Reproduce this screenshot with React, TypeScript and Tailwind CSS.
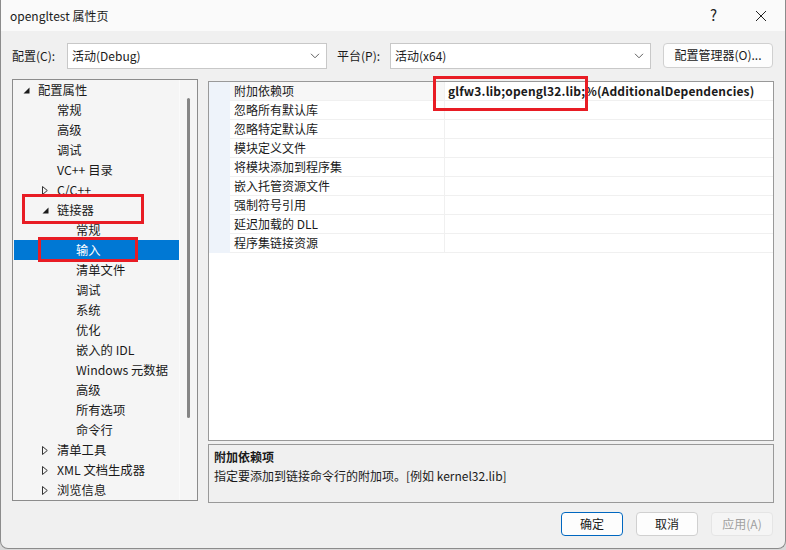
import React from 'react';

type Node = { label: string; level: number; arrow?: 'open' | 'closed'; selected?: boolean };

const treeItems: Node[] = [
  { label: '配置属性', level: 0, arrow: 'open' },
  { label: '常规', level: 1 },
  { label: '高级', level: 1 },
  { label: '调试', level: 1 },
  { label: 'VC++ 目录', level: 1 },
  { label: 'C/C++', level: 1, arrow: 'closed' },
  { label: '链接器', level: 1, arrow: 'open' },
  { label: '常规', level: 2 },
  { label: '输入', level: 2, selected: true },
  { label: '清单文件', level: 2 },
  { label: '调试', level: 2 },
  { label: '系统', level: 2 },
  { label: '优化', level: 2 },
  { label: '嵌入的 IDL', level: 2 },
  { label: 'Windows 元数据', level: 2 },
  { label: '高级', level: 2 },
  { label: '所有选项', level: 2 },
  { label: '命令行', level: 2 },
  { label: '清单工具', level: 1, arrow: 'closed' },
  { label: 'XML 文档生成器', level: 1, arrow: 'closed' },
  { label: '浏览信息', level: 1, arrow: 'closed' },
];

const properties = [
  { name: '附加依赖项', value: 'glfw3.lib;opengl32.lib;%(AdditionalDependencies)' },
  { name: '忽略所有默认库', value: '' },
  { name: '忽略特定默认库', value: '' },
  { name: '模块定义文件', value: '' },
  { name: '将模块添加到程序集', value: '' },
  { name: '嵌入托管资源文件', value: '' },
  { name: '强制符号引用', value: '' },
  { name: '延迟加载的 DLL', value: '' },
  { name: '程序集链接资源', value: '' },
];

// tree inner box starts at x=13
const indent = ['pl-[25px]', 'pl-[44px]', 'pl-[63px]'];
const arrowPos = ['left-[10px]', 'left-[29px]', 'left-[48px]'];

const Arrow = ({ kind }: { kind: 'open' | 'closed' }) =>
  kind === 'open' ? (
    <svg width="7" height="7" viewBox="0 0 7 7">
      <path d="M6.5 0.5 L6.5 6.5 L0.5 6.5 Z" fill="#1b1b1b" />
    </svg>
  ) : (
    <svg width="6" height="9" viewBox="0 0 6 9">
      <path d="M0.5 0.5 L5.3 4.5 L0.5 8.5 Z" fill="none" stroke="#333" strokeWidth="1" />
    </svg>
  );

const Chevron = () => (
  <svg width="10" height="6" viewBox="0 0 10 6">
    <path d="M1 0.8 L5 4.8 L9 0.8" fill="none" stroke="#606060" strokeWidth="1" />
  </svg>
);

const Combo = ({ text, width }: { text: string; width: string }) => (
  <div className={`${width} h-[26px] bg-white border border-[#c8c8c8] flex items-center justify-between pl-[4px] pr-[6px]`}>
    <span>{text}</span>
    <Chevron />
  </div>
);

export default function App() {
  return (
    <div className="relative w-[786px] h-[550px] bg-[#d9d9d9] overflow-hidden text-[12px] text-[#1a1a1a] font-['Microsoft_YaHei_UI','Noto_Sans_CJK_SC',sans-serif]">
      <div className="w-[786px] h-[549px] bg-[#f0f0f0] border border-t-0 border-[#8c8c8c] rounded-b-[8px] flex flex-col">
        {/* title bar */}
        <div className="h-[31px] bg-[#fafafa] flex items-center pl-[9px] pr-[18px]">
          <span className="flex-1 text-[12px]">opengltest 属性页</span>
          <span className="text-[15px] text-[#222] mr-[38px]">?</span>
          <svg width="12" height="12" viewBox="0 0 12 12">
            <path d="M1 1 L11 11 M11 1 L1 11" stroke="#222" strokeWidth="1" />
          </svg>
        </div>

        {/* config row */}
        <div className="flex items-center mt-[12px] pl-[11px] h-[26px]">
          <span className="w-[55px]">配置(C):</span>
          <Combo text="活动(Debug)" width="w-[260px]" />
          <span className="ml-[10px] w-[53px]">平台(P):</span>
          <Combo text="活动(x64)" width="w-[261px]" />
          <div className="ml-[12px] w-[110px] h-[25px] -mt-[2px] bg-[#fdfdfd] border border-[#d0d0d0] rounded-[4px] flex items-center justify-center">
            配置管理器(O)...
          </div>
        </div>

        {/* main */}
        <div className="flex mt-[10px] pl-[11px]">
          <div className="w-[186px] h-[422px] border border-[#8c8c8c] bg-[#f5f5f5] flex overflow-hidden">
            <div className="w-[166px] flex flex-col">
              {treeItems.map((n, i) => (
                <div
                  key={i}
                  className={`relative h-[20px] shrink-0 flex items-center text-[12.3px] ${indent[n.level]} ${
                    n.selected ? 'bg-[#0078d4] text-white ml-[1px]' : ''
                  }`}
                >
                  {n.arrow && (
                    <span className={`absolute ${arrowPos[n.level]} ${n.arrow === 'open' ? 'top-[7px]' : 'top-[6px]'} flex`}>
                      <Arrow kind={n.arrow} />
                    </span>
                  )}
                  <span className={n.selected ? '-ml-[1px]' : ''}>{n.label}</span>
                </div>
              ))}
            </div>
            <div className="w-[18px] border-l border-[#fafafa] flex justify-center pt-[18px]">
              <div className="w-[3px] h-[320px] bg-[#858585] rounded-full"></div>
            </div>
          </div>

          <div className="ml-[10px] w-[566px] mt-[2px] flex flex-col">
            <div className="h-[360px] border border-[#999] bg-white flex flex-col">
              {properties.map((p, i) => (
                <div key={i} className="flex h-[19px] shrink-0">
                  <div className="w-[21px] bg-[#eef3fa]"></div>
                  <div className={`w-[214px] pl-[4px] flex items-center border-b border-[#f0f0f0] ${i === 0 ? 'bg-[#f7f7f7]' : ''}`}>
                    {p.name}
                  </div>
                  <div className="flex-1 pl-[3px] flex items-center border-b border-l border-[#f0f0f0] font-bold tracking-[0.15px]">
                    {p.value}
                  </div>
                </div>
              ))}
              <div className="flex-1 bg-white"></div>
            </div>
            <div className="mt-[3px] h-[59px] border border-[#999] bg-[#f0f0f0] px-[5px] pt-[2px] flex flex-col">
              <span className="font-bold leading-[19px]">附加依赖项</span>
              <span className="leading-[19px]">指定要添加到链接命令行的附加项。[例如 kernel32.lib]</span>
            </div>
          </div>
        </div>

        {/* buttons */}
        <div className="flex justify-end gap-[13px] pr-[12px] mt-[9px]">
          <div className="w-[62px] h-[24px] bg-[#fdfdfd] border border-[#0067c0] rounded-[4px] flex items-center justify-center">确定</div>
          <div className="w-[62px] h-[24px] bg-[#fdfdfd] border border-[#d0d0d0] rounded-[4px] flex items-center justify-center">取消</div>
          <div className="w-[62px] h-[24px] bg-[#f5f5f5] border border-[#e5e5e5] rounded-[4px] flex items-center justify-center text-[#a0a0a0]">应用(A)</div>
        </div>
      </div>

      {/* red annotation boxes */}
      <div className="absolute left-[22px] top-[194px] w-[122px] h-[30px] border-[3px] border-[#e81c24]"></div>
      <div className="absolute left-[38px] top-[237px] w-[100px] h-[25px] border-[3px] border-[#e81c24]"></div>
      <div className="absolute left-[433px] top-[76px] w-[155px] h-[35px] border-[3px] border-[#e81c24]"></div>
    </div>
  );
}
